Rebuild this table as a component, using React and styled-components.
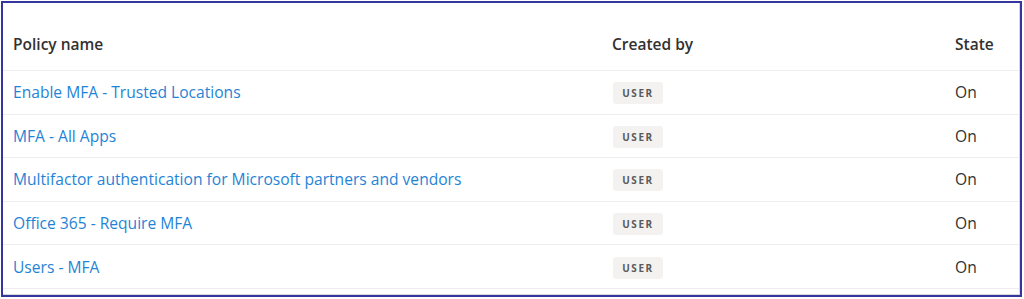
import React from "react";
import styled, { createGlobalStyle } from "styled-components";

const Global = createGlobalStyle`
  html, body { margin: 0; padding: 0; background: #fff; }
  body { font-family: "Open Sans", "Noto Sans", Arial, sans-serif; }
`;

const Page = styled.div`
  padding: 1px 2px 2px 1px;
  width: 1024px;
  height: 299px;
  box-sizing: border-box;
`;

const Frame = styled.div`
  border: 2px solid #3535a0;
  height: 100%;
  box-sizing: border-box;
  background: #fff;
`;

const Table = styled.div`
  border-right: 1px solid #d8d8d8;
  border-bottom: 1px solid #d8d8d8;
  height: 100%;
  box-sizing: border-box;
  overflow: hidden;
`;

const Row = styled.div`
  display: grid;
  grid-template-columns: 599px 343px 1fr;
  align-items: center;
  padding-left: 10px;
  height: ${(p) => (p.$header ? "68px" : "43.6px")};
  border-bottom: 1px solid #ededed;
  box-sizing: border-box;
  ${(p) => p.$header && "padding-top: 14px;"}
`;

const HeadCell = styled.div`
  font-size: 15.5px;
  font-weight: 600;
  color: #323130;
`;

const LinkCell = styled.a`
  font-size: 15.6px;
  color: #1f84d6;
  text-decoration: none;
  white-space: nowrap;
`;

const Badge = styled.span`
  display: inline-flex;
  align-items: center;
  justify-content: center;
  width: 50px;
  height: 22px;
  margin-left: 1px;
  margin-top: 2px;
  background: #f3f2f1;
  border-radius: 3px;
  font-size: 10px;
  font-weight: 700;
  letter-spacing: 1.6px;
  color: #5a5a5a;
`;

const Cell = styled.div`
  font-size: 15.6px;
  color: #323130;
`;

const policies = [
  "Enable MFA - Trusted Locations",
  "MFA - All Apps",
  "Multifactor authentication for Microsoft partners and vendors",
  "Office 365 - Require MFA",
  "Users - MFA",
];

export default function App() {
  return (
    <Page>
      <Global />
      <Frame>
        <Table>
          <Row $header>
            <HeadCell>Policy name</HeadCell>
            <HeadCell>Created by</HeadCell>
            <HeadCell>State</HeadCell>
          </Row>
          {policies.map((p) => (
            <Row key={p}>
              <div>
                <LinkCell href="#">{p}</LinkCell>
              </div>
              <div>
                <Badge>USER</Badge>
              </div>
              <Cell>On</Cell>
            </Row>
          ))}
        </Table>
      </Frame>
    </Page>
  );
}
